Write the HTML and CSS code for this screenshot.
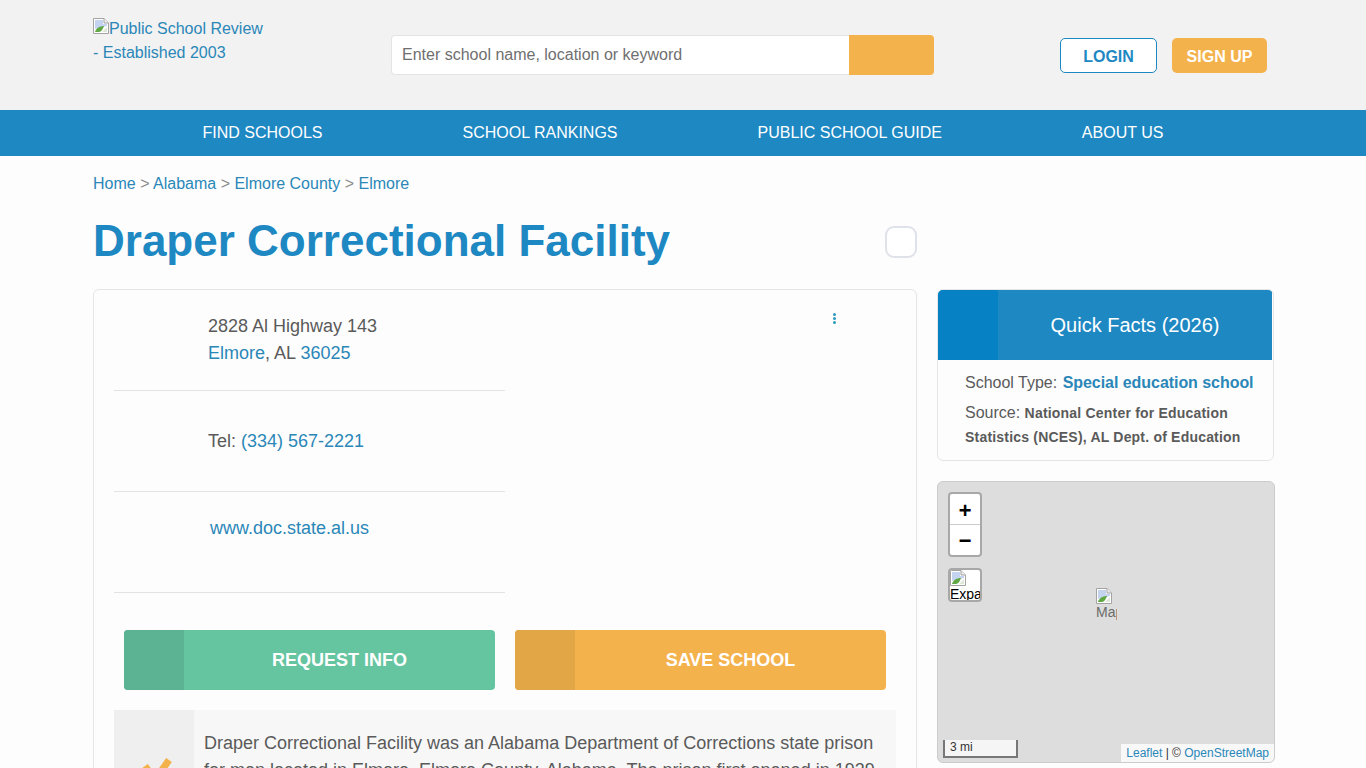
FILE: index.html
```html
<!DOCTYPE html>
<html lang="en">
<head>
    <meta charset="UTF-8">
    <meta name="viewport" content="width=device-width, initial-scale=1.0">
    <title>Draper Correctional Facility</title>
    <link rel="stylesheet" href="styles.css">
</head>
<body>
    <svg class="defs" width="0" height="0">
        <symbol id="broken" viewBox="0 0 16 16">
            <path d="M.5.5H11L15.500 5V15.500H.5Z" fill="#fff" stroke="#a3a3a3"/>
            <path d="M11 .5V5H15.500" fill="#eee" stroke="#a3a3a3"/>
            <path d="M2 2H10V6H14V8L2 11Z" fill="#c4d3f0"/>
            <path d="M2 14C3 10 7 8 11 8C10 11 8 14 6 14Z" fill="#5fa844"/>
            <path d="M9 14L14 9V14Z" fill="#dfe8d8"/>
        </symbol>
    </svg>

    <header class="top">
        <div class="logo">
            <a href="#"><svg class="broken"><use href="#broken"/></svg>Public School Review</a><br>
            - <a href="#">Established 2003</a>
        </div>
        <form class="search">
            <input type="text" placeholder="Enter school name, location or keyword">
            <button type="button"></button>
        </form>
        <div class="auth">
            <a class="login" href="#">LOGIN</a>
            <a class="signup" href="#">SIGN UP</a>
        </div>
    </header>

    <nav class="menu">
        <a href="#">FIND SCHOOLS</a>
        <a href="#">SCHOOL RANKINGS</a>
        <a href="#">PUBLIC SCHOOL GUIDE</a>
        <a href="#">ABOUT US</a>
    </nav>

    <div class="crumbs">
        <a href="#">Home</a> &gt; <a href="#">Alabama</a> &gt; <a href="#">Elmore County</a> &gt; <a href="#">Elmore</a>
    </div>

    <div class="title-row">
        <h1>Draper Correctional Facility</h1>
        <button class="fav" type="button"></button>
    </div>

    <div class="columns">
        <main class="card">
            <div class="contact-wrap">
                <div class="contact">
                    <div class="contact-row address">
                        2828 Al Highway 143<br>
                        <a href="#">Elmore</a>, AL <a href="#">36025</a>
                    </div>
                    <div class="contact-row phone">Tel: <a href="#">(334) 567-2221</a></div>
                    <div class="contact-row web"><a href="#">www.doc.state.al.us</a></div>
                </div>
                <div class="dots"><i></i><i></i><i></i></div>
            </div>

            <div class="actions">
                <a class="action green" href="#"><span class="action-icon"></span><span class="action-label">REQUEST INFO</span></a>
                <a class="action orange" href="#"><span class="action-icon"></span><span class="action-label">SAVE SCHOOL</span></a>
            </div>

            <div class="about">
                <div class="about-icon">
                    <svg width="32" height="32" viewBox="0 0 32 32"><path d="M5 10L15 24L29 4" fill="none" stroke="#f4b24d" stroke-width="7"/></svg>
                </div>
                <p>Draper Correctional Facility was an Alabama Department of Corrections state prison for men located in Elmore, Elmore County, Alabama. The prison first opened in 1939</p>
            </div>
        </main>

        <aside class="side">
            <section class="facts">
                <div class="facts-head">
                    <span class="facts-icon"></span>
                    <h2>Quick Facts (2026)</h2>
                </div>
                <div class="facts-body">
                    <div class="fact-type">School Type: <a href="#">Special education school</a></div>
                    <div class="fact-source">Source: <b>National Center for Education Statistics (NCES), AL Dept. of Education</b></div>
                </div>
            </section>

            <section class="map">
                <div class="zoom-box">
                    <a class="zoom-in" href="#">+</a>
                    <a class="zoom-out" href="#">&minus;</a>
                </div>
                <div class="expand"><svg class="broken"><use href="#broken"/></svg><span>Expand</span></div>
                <div class="marker"><svg class="broken"><use href="#broken"/></svg><span>Map</span></div>
                <div class="scale">3 mi</div>
                <div class="attrib"><a href="#">Leaflet</a> | &copy; <a href="#">OpenStreetMap</a></div>
            </section>
        </aside>
    </div>
</body>
</html>
```
FILE: styles.css
```css
html, body {
    height: 768px;
    overflow: hidden;
}
body {
    margin: 0;
    font-family: "Liberation Sans", Arial, sans-serif;
    font-size: 18px;
    color: #5a5a5a;
    background: #fdfdfd;
}
a {
    color: #2a87b8;
    text-decoration: none;
}
.defs {
    position: absolute;
}
.broken {
    width: 16px;
    height: 16px;
    display: block;
}

/* header */
.top {
    height: 110px;
    background: #f2f2f2;
    display: flex;
    box-sizing: border-box;
    padding-left: 93px;
}
.logo {
    width: 298px;
    padding-top: 17px;
    font-size: 16px;
    line-height: 24px;
    color: #2a87b8;
}
.logo .broken {
    display: inline-block;
    vertical-align: 0;
}
.search {
    width: 543px;
    height: 40px;
    margin-top: 35px;
    display: flex;
}
.search input {
    flex: 1;
    min-width: 0;
    box-sizing: border-box;
    border: 1px solid #e4e4e4;
    border-right: none;
    border-radius: 4px 0 0 4px;
    padding: 0 10px;
    background: #fff;
    font-family: inherit;
    font-size: 16px;
    color: #666;
}
.search input::placeholder {
    color: #6f6f6f;
    opacity: 1;
}
.search button {
    width: 85px;
    border: none;
    border-radius: 0 4px 4px 0;
    background: #f4b24d;
}
.auth {
    display: flex;
    gap: 15px;
    margin: 38px 0 0 126px;
}
.auth a {
    height: 35px;
    box-sizing: border-box;
    border-radius: 5px;
    text-align: center;
    font-size: 16px;
    font-weight: bold;
}
.login {
    width: 97px;
    line-height: 35px;
    border: 1px solid #1e88c3;
    background: #fff;
    color: #1e88c3;
}
.signup {
    width: 95px;
    line-height: 37px;
    background: #f4b24d;
    color: #fff;
}

/* nav */
.menu {
    height: 46px;
    background: #1e88c3;
    display: flex;
    padding-left: 132.500px;
}
.menu a {
    padding: 0 70px;
    line-height: 46px;
    font-size: 16px;
    color: #fff;
}

.crumbs {
    margin: 17px 0 0 93px;
    font-size: 16px;
    line-height: 21px;
    color: #8a8a8a;
}

.title-row {
    width: 824px;
    margin: 19px 0 0 93px;
    display: flex;
    align-items: center;
    justify-content: space-between;
}
h1 {
    margin: 0;
    font-size: 44px;
    line-height: 56px;
    font-weight: bold;
    color: #1e88c3;
}
.fav {
    width: 32px;
    height: 32px;
    margin-top: 2px;
    background: #fff;
    border: 2px solid #e0e2ea;
    border-radius: 9px;
}

.columns {
    display: flex;
    gap: 20px;
    margin: 20px 0 0 93px;
    align-items: flex-start;
}

/* main card */
.card {
    width: 824px;
    box-sizing: border-box;
    border: 1px solid #e6e6e6;
    border-radius: 6px;
    padding: 0 20px 20px;
}
.contact-wrap {
    display: flex;
    height: 340px;
}
.contact {
    width: 391px;
}
.contact-row {
    border-bottom: 1px solid #e3e3e3;
    padding-left: 94px;
    line-height: 27px;
    box-sizing: border-box;
}
.address {
    height: 101px;
    padding-top: 23px;
}
.phone {
    height: 101px;
    padding-top: 37px;
}
.web {
    height: 101px;
    padding: 23px 0 0 96px;
}
.dots {
    margin: 23px 0 0 328px;
    display: flex;
    flex-direction: column;
    gap: 1px;
}
.dots i {
    width: 3px;
    height: 3px;
    border-radius: 50%;
    background: #2a9bbd;
}
.actions {
    display: flex;
    gap: 20px;
    padding: 0 10px;
}
.action {
    flex: 1;
    height: 60px;
    display: flex;
    border-radius: 4px;
    overflow: hidden;
    color: #fff;
    font-size: 18px;
    font-weight: bold;
    line-height: 60px;
}
.action-icon {
    width: 60px;
}
.action-label {
    flex: 1;
    text-align: center;
}
.green {
    background: #65c5a0;
}
.green .action-icon {
    background: #5cb394;
}
.orange {
    background: #f4b24d;
}
.orange .action-icon {
    background: #e2a646;
}
.about {
    display: flex;
    margin-top: 20px;
    background: #f7f7f7;
}
.about-icon {
    width: 80px;
    height: 120px;
    flex: none;
    background: #efefef;
    box-sizing: border-box;
    padding: 46px 0 0 26px;
}
.about p {
    margin: 0;
    padding: 20px 10px;
    line-height: 27px;
}

/* sidebar */
.side {
    width: 337px;
    display: flex;
    flex-direction: column;
    gap: 20px;
}
.facts {
    width: 337px;
    box-sizing: border-box;
    border: 1px solid #e6e6e6;
    border-radius: 6px;
    overflow: hidden;
    height: 172px;
}
.facts-head {
    height: 70px;
    margin-right: 1px;
    display: flex;
    background: #1e88c3;
}
.facts-icon {
    width: 60px;
    background: #0681c4;
}
.facts-head h2 {
    flex: 1;
    margin: 0;
    text-align: center;
    font-size: 20px;
    font-weight: normal;
    line-height: 70px;
    color: #fff;
}
.facts-body {
    padding: 12px 10px 0 27px;
    font-size: 16px;
}
.fact-type {
    line-height: 22px;
}
.fact-type a {
    font-weight: bold;
    margin-left: 1px;
    letter-spacing: -0.05px;
}
.fact-source {
    margin-top: 7px;
    line-height: 24px;
}
.fact-source b {
    font-size: 14px;
    letter-spacing: 0.2px;
}

/* map */
.map {
    position: relative;
    width: 338px;
    height: 282px;
    box-sizing: border-box;
    background: #ddd;
    border: 1px solid #ccc;
    border-radius: 6px;
    overflow: hidden;
}
.zoom-box {
    position: absolute;
    left: 10px;
    top: 10px;
    width: 34px;
    border: 2px solid #a8a8a8;
    border-radius: 4px;
    box-sizing: border-box;
    background: #fff;
}
.zoom-box a {
    display: block;
    height: 30px;
    text-align: center;
    font-family: "Liberation Mono", monospace;
    font-size: 22px;
    font-weight: bold;
    color: #000;
}
.zoom-in {
    line-height: 37px;
}
.zoom-out {
    line-height: 35px;
    border-top: 1px solid #ccc;
}
.expand {
    position: absolute;
    left: 10px;
    top: 86px;
    width: 34px;
    height: 34px;
    box-sizing: border-box;
    border: 2px solid #a8a8a8;
    border-radius: 4px;
    background: #fff;
    overflow: hidden;
    font-size: 14px;
    line-height: 16px;
    color: #000;
}
.expand span, .marker span {
    display: block;
}
.marker {
    position: absolute;
    left: 158px;
    top: 106px;
    width: 21px;
    height: 33px;
    overflow: hidden;
    font-size: 14px;
    line-height: 16px;
    color: #6a6a6a;
}
.scale {
    position: absolute;
    left: 5px;
    bottom: 4px;
    width: 75px;
    height: 18px;
    box-sizing: border-box;
    border: 2px solid #777;
    border-top: none;
    background: rgba(255, 255, 255, 0.7);
    padding-left: 5px;
    font-size: 12px;
    line-height: 15px;
    color: #333;
}
.attrib {
    position: absolute;
    right: 0;
    bottom: 0;
    height: 18px;
    padding: 0 5px;
    background: rgba(255, 255, 255, 0.8);
    font-size: 12px;
    line-height: 18px;
    color: #333;
}
```
